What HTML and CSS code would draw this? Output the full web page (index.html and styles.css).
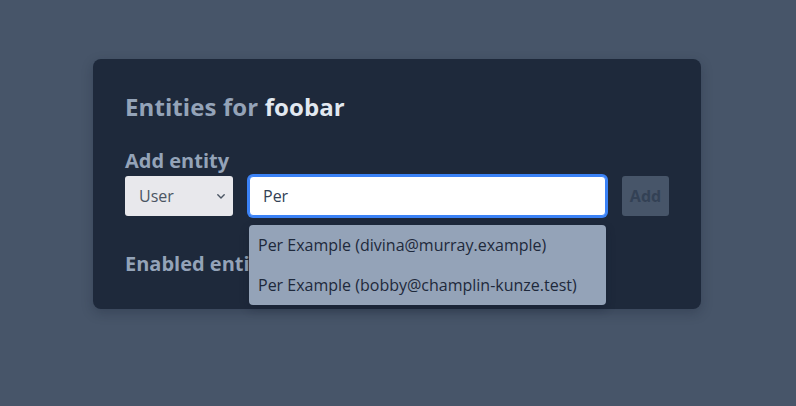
FILE: index.html
```html
<!DOCTYPE html>
<html lang="en">
<head>
<meta charset="utf-8">
<title>Entities for foobar</title>
<link rel="stylesheet" href="styles.css">
</head>
<body>
<main class="page">
  <section class="card">
    <h1 class="title">Entities for <strong class="title-name">foobar</strong></h1>
    <h2 class="label">Add entity</h2>
    <div class="add-row">
      <div class="select">
        <span class="select-value">User</span>
        <svg class="chevron" width="8" height="5" viewBox="0 0 8 5" aria-hidden="true"><path d="M0.8 0.8 L4 4 L7.2 0.8" fill="none" stroke="#4b5563" stroke-width="1.4" stroke-linecap="round" stroke-linejoin="round"/></svg>
      </div>
      <div class="combo">
        <div class="input">Per</div>
        <ul class="menu">
          <li class="menu-item">Per Example (divina@murray.example)</li>
          <li class="menu-item">Per Example (bobby@champlin-kunze.test)</li>
        </ul>
      </div>
      <button class="add-btn" type="button">Add</button>
    </div>
    <h2 class="label label-enabled">Enabled entities</h2>
  </section>
</main>
</body>
</html>
```
FILE: styles.css
```css
html, body {
  margin: 0;
  padding: 0;
}
body {
  background: #475569;
  font-family: "Open Sans", "Noto Sans", sans-serif;
  width: 796px;
  height: 406px;
  overflow: hidden;
}
.page {
  display: flex;
  justify-content: center;
  padding: 59px 2px 0 0;
}
.card {
  width: 608px;
  box-sizing: border-box;
  padding: 32px 32px 31px 32px;
  background: #1e293b;
  border-radius: 8px;
  box-shadow: 0 4px 12px rgba(15, 23, 42, 0.25);
}
.title {
  margin: 0 0 24px 0;
  font-size: 24px;
  line-height: 32px;
  font-weight: 700;
  letter-spacing: 0.1px;
  color: #94a3b8;
}
.title-name {
  font-weight: 700;
  color: #e2e8f0;
}
.label {
  margin: 0 0 1px 0;
  font-size: 20px;
  line-height: 28px;
  font-weight: 700;
  color: #94a3b8;
}
.label-enabled {
  margin: 34px 0 0 0;
}
.add-row {
  display: flex;
  align-items: flex-start;
  gap: 16px;
}
.select {
  width: 108px;
  height: 40px;
  box-sizing: border-box;
  display: flex;
  align-items: center;
  justify-content: space-between;
  padding: 0 8px 0 14px;
  background: #e8e8ec;
  border-radius: 3px;
  font-size: 16px;
  color: #4b5563;
}
.chevron {
  display: block;
  margin-top: 1px;
}
.combo {
  position: relative;
  flex: 1;
}
.input {
  height: 40px;
  box-sizing: border-box;
  display: flex;
  align-items: center;
  padding: 0 13px;
  background: #ffffff;
  border: 1px solid #3b82f6;
  border-radius: 4px;
  box-shadow: 0 0 0 2px #3b82f6;
  font-size: 16px;
  color: #334155;
}
.menu {
  position: absolute;
  left: 0;
  right: 0;
  top: 49px;
  margin: 0;
  padding: 0;
  list-style: none;
  background: #94a3b8;
  border-radius: 4px;
  box-shadow: 0 4px 10px rgba(15, 23, 42, 0.3);
}
.menu-item {
  padding: 8px 9px;
  font-size: 16px;
  line-height: 24px;
  color: #1e293b;
  white-space: nowrap;
}
.add-btn {
  width: 47px;
  height: 40px;
  padding: 0;
  border: none;
  border-radius: 3px;
  background: #475569;
  color: #334155;
  font-family: "Open Sans", "Noto Sans", sans-serif;
  font-size: 16px;
  font-weight: 700;
}
```
